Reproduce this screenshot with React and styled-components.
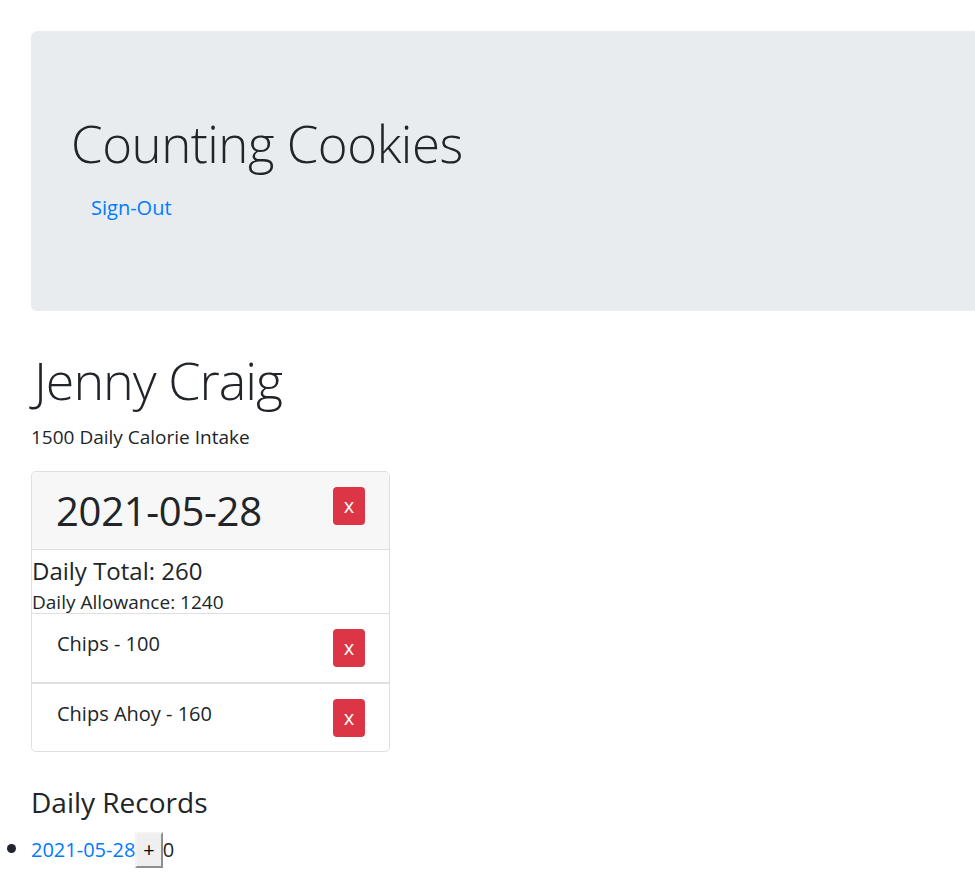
import React from 'react'
import styled, { createGlobalStyle } from 'styled-components'

const GlobalStyle = createGlobalStyle`
    html, body {
        margin: 0;
        padding: 0;
        background: #fff;
        overflow-x: hidden;
    }
    body {
        font-family: "Open Sans", "Noto Sans", sans-serif;
        font-size: 20px;
        line-height: 1.5;
        color: #212529;
    }
`;

const Page = styled.div`
    padding: 31px 0 0 31px;
`;

const Jumbotron = styled.div`
    background: #e9ecef;
    border-radius: 6px 0 0 6px;
    margin-right: -20px;
    padding: 79px 40px 80px 40px;
    margin-bottom: 38px;
`;

const Title = styled.h1`
    margin: 0 0 9px;
    font-size: 51px;
    font-weight: 300;
    letter-spacing: -0.5px;
    line-height: 66px;
`;

const NavLink = styled.a`
    display: inline-block;
    padding: 8px 20px;
    color: #007bff;
    text-decoration: none;
    font-size: 20px;
    line-height: 1.5;
    cursor: pointer;
`;

const UserName = styled.h1`
    margin: 0 0 13px;
    padding-left: 3px;
    font-size: 52px;
    font-weight: 300;
    letter-spacing: -1px;
    line-height: 61px;
`;

const Intake = styled.p`
    margin: 0 0 19px;
    font-size: 19px;
`;

const Card = styled.div`
    width: 357px;
    border: 1px solid #dfdfdf;
    border-radius: 5px;
    overflow: hidden;
`;

const CardHeader = styled.div`
    display: flex;
    justify-content: space-between;
    align-items: flex-start;
    padding: 15px 24px 14px 24px;
    background: #f7f7f7;
    border-bottom: 1px solid #dfdfdf;
`;

const DateTitle = styled.h2`
    margin: 0;
    font-size: 40px;
    font-weight: 400;
    letter-spacing: -0.3px;
    line-height: 1.2;
`;

const DeleteButton = styled.button`
    width: 32px;
    height: 38px;
    padding: 0;
    border: none;
    border-radius: 4px;
    background: #dc3545;
    color: #fff;
    font-family: inherit;
    font-size: 20px;
    line-height: 1;
    cursor: pointer;
`;

const Total = styled.h4`
    margin: 7px 0 7px;
    font-size: 24px;
    font-weight: 400;
    line-height: 1.2;
`;

const Allowance = styled.h6`
    margin: 0;
    font-size: 19px;
    font-weight: 400;
    line-height: 21px;
`;

const ItemList = styled.div`
    display: flex;
    flex-direction: column;
`;

const Item = styled.div`
    display: flex;
    justify-content: space-between;
    align-items: flex-start;
    padding: 15px 24px ${p => (p.last ? '14px' : '15px')} 25px;
    border-top: 1px solid #dfdfdf;
    border-bottom: ${p => (p.last ? 'none' : '1px solid #dfdfdf')};
`;

const RecordsTitle = styled.h3`
    margin: 34px 0 10px;
    font-size: 28px;
    font-weight: 400;
    line-height: 1.2;
`;

const Records = styled.ul`
    margin: 0;
    padding: 0;
`;

const Record = styled.li`
    list-style: disc outside;
    &::marker {
        font-size: 24px;
    }
`;

const RecordLink = styled.a`
    color: #007bff;
    text-decoration: none;
`;

const PlusButton = styled.button`
    font-family: inherit;
    font-size: 20px;
    line-height: 1.5;
    padding: 1px 6px;
    background: #efefef;
    color: #000;
    border-width: 2px;
    border-style: solid;
    border-color: #f4f4f4 #8f8f8f #8f8f8f #f4f4f4;
    vertical-align: baseline;
`;

const entries = [
    { name: 'Chips', calories: 100 },
    { name: 'Chips Ahoy', calories: 160 }
]

const App = () => {
    const total = entries.reduce((sum, e) => sum + e.calories, 0)
    return (
        <Page>
            <GlobalStyle />
            <Jumbotron>
                <Title>Counting Cookies</Title>
                <NavLink>Sign-Out</NavLink>
            </Jumbotron>
            <UserName>Jenny Craig</UserName>
            <Intake>1500 Daily Calorie Intake</Intake>
            <Card>
                <CardHeader>
                    <DateTitle>2021-05-28</DateTitle>
                    <DeleteButton>x</DeleteButton>
                </CardHeader>
                <Total>Daily Total: {total}</Total>
                <Allowance>Daily Allowance: {1500 - total}</Allowance>
                <ItemList>
                    {entries.map((e, i) => (
                        <Item key={e.name} last={i === entries.length - 1}>
                            <span>{e.name} - {e.calories}</span>
                            <DeleteButton>x</DeleteButton>
                        </Item>
                    ))}
                </ItemList>
            </Card>
            <RecordsTitle>Daily Records</RecordsTitle>
            <Records>
                <Record>
                    <RecordLink>2021-05-28</RecordLink>
                    <PlusButton>+</PlusButton>0
                </Record>
            </Records>
        </Page>
    )
}

export default App
